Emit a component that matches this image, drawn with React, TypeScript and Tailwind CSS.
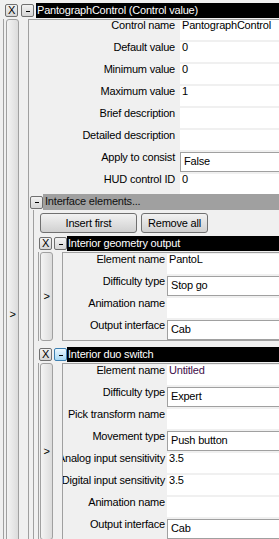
import React from "react";

type RowDef = { label: string; value?: string; combo?: boolean; color?: string };

function SmallBtn({ children, hot }: { children: React.ReactNode; hot?: boolean }) {
  return (
    <div
      className={
        "w-[13px] h-[13px] shrink-0 rounded-[2px] border flex items-center justify-center text-[11px] leading-none " +
        (hot
          ? "border-[#3c7fb1] bg-gradient-to-b from-[#eaf6fd] to-[#a7d9f5]"
          : "border-[#707070] bg-gradient-to-b from-[#f2f2f2] to-[#d5d5d5]")
      }
    >
      {children}
    </div>
  );
}

function Dash() {
  return <span className="block w-[4px] h-[1px] bg-black mt-[1px]" />;
}

function Rows({ rows, labelW, labelPr }: { rows: RowDef[]; labelW: string; labelPr: string }) {
  return (
    <div className="flex flex-col gap-[2px]">
      {rows.map((r, i) => (
        <div key={i} className="flex h-[20px]">
          <div className={"shrink-0 flex justify-end overflow-hidden " + labelW + " " + labelPr}>
            <span className="whitespace-nowrap leading-[11px]">{r.label}</span>
          </div>
          {r.combo ? (
            <div className="flex-1 bg-white border border-[#a0a0a0] pl-[3px] leading-[16px]">{r.value}</div>
          ) : (
            <div className="flex-1 bg-white pl-[2px] leading-[11px]" style={r.color ? { color: r.color } : undefined}>
              {r.value}
            </div>
          )}
        </div>
      ))}
    </div>
  );
}

function Header({ title, hot, xMl, dashMl, titleMl }: { title: string; hot?: boolean; xMl: string; dashMl: string; titleMl: string }) {
  return (
    <div className="flex h-[15px]">
      <div className={"mt-[1px] " + xMl}>
        <SmallBtn>X</SmallBtn>
      </div>
      <div className={"mt-[1px] " + dashMl}>
        <SmallBtn hot={hot}>
          <Dash />
        </SmallBtn>
      </div>
      <div className={"flex-1 bg-black text-white leading-[15px] pl-[1px] whitespace-nowrap " + titleMl}>{title}</div>
    </div>
  );
}

function SideBtn({ arrowTop }: { arrowTop?: string }) {
  return (
    <div
      className={
        "w-[13px] shrink-0 rounded-[3px] border border-[#a0a0a0] bg-gradient-to-r from-[#f4f4f4] to-[#dcdcdc] flex justify-center text-[11px] " +
        (arrowTop ? arrowTop : "items-center")
      }
    >
      <span>&gt;</span>
    </div>
  );
}

const geomRows: RowDef[] = [
  { label: "Element name", value: "PantoL" },
  { label: "Difficulty type", value: "Stop go", combo: true },
  { label: "Animation name", value: "" },
  { label: "Output interface", value: "Cab", combo: true },
];

const duoRows: RowDef[] = [
  { label: "Element name", value: "Untitled", color: "#3f0f4a" },
  { label: "Difficulty type", value: "Expert", combo: true },
  { label: "Pick transform name", value: "" },
  { label: "Movement type", value: "Push button", combo: true },
  { label: "Analog input sensitivity", value: "3.5" },
  { label: "Digital input sensitivity", value: "3.5" },
  { label: "Animation name", value: "" },
  { label: "Output interface", value: "Cab", combo: true },
];

const topRows: RowDef[] = [
  { label: "Control name", value: "PantographControl" },
  { label: "Default value", value: "0" },
  { label: "Minimum value", value: "0" },
  { label: "Maximum value", value: "1" },
  { label: "Brief description", value: "" },
  { label: "Detailed description", value: "" },
  { label: "Apply to consist", value: "False", combo: true },
  { label: "HUD control ID", value: "0" },
];

function Nested({ title, hot, rows }: { title: string; hot?: boolean; rows: RowDef[] }) {
  return (
    <div className="flex flex-col">
      <Header title={title} hot={hot} xMl="ml-[1px]" dashMl="ml-[2px]" titleMl="ml-[0px]" />
      <div className="flex mt-[1px] border-l border-[#a0a0a0]">
        <div className="ml-[1px] flex">
          <SideBtn />
        </div>
        <div className="ml-[9px] flex-1 border-l border-t border-b border-[#a0a0a0] pt-[1px]">
          <Rows rows={rows} labelW="w-[104px]" labelPr="pr-[2px]" />
        </div>
      </div>
    </div>
  );
}

export default function App() {
  return (
    <div className="w-[279px] h-[539px] overflow-hidden bg-[#f0f0f0] relative text-[11px] tracking-[-0.2px] text-black font-['Liberation_Sans',Arial,sans-serif]">
      <div className="w-[340px] pl-[3px] pt-[3px]">
        <Header title="PantographControl (Control value)" xMl="ml-[2px]" dashMl="ml-[3px]" titleMl="ml-[2px]" />
        <div className="flex mt-[1px] h-[600px] border-l border-[#a0a0a0]">
          <div className="ml-[2px] flex">
            <SideBtn arrowTop="pt-[286px]" />
          </div>
          <div className="ml-[9px] flex-1 border-l border-t border-[#a0a0a0]">
            <Rows rows={topRows} labelW="w-[151px]" labelPr="pr-[5px]" />
            {/* Interface elements */}
            <div className="flex h-[16px] items-center">
              <div className="ml-[1px]">
                <SmallBtn>
                  <Dash />
                </SmallBtn>
              </div>
              <div className="flex-1 h-[16px] bg-[#a0a0a0] text-[#101010] pl-[2px] leading-[15px]">Interface elements...</div>
            </div>
            <div className="ml-[4px] border-l border-[#a0a0a0] pl-[4px] pt-[3px]">
              <div className="flex gap-[4px] ml-[2px]">
                <button className="w-[97px] h-[20px] rounded-[3px] border border-[#707070] bg-gradient-to-b from-[#f2f2f2] to-[#d0d0d0] text-[11px] leading-[16px]">
                  Insert first
                </button>
                <button className="w-[67px] h-[20px] rounded-[3px] border border-[#707070] bg-gradient-to-b from-[#f2f2f2] to-[#d0d0d0] text-[11px] leading-[16px]">
                  Remove all
                </button>
              </div>
              <div className="mt-[3px]">
                <Nested title="Interior geometry output" rows={geomRows} />
                <div className="mt-[6px]">
                  <Nested title="Interior duo switch" hot rows={duoRows} />
                </div>
              </div>
            </div>
          </div>
        </div>
      </div>
    </div>
  );
}
